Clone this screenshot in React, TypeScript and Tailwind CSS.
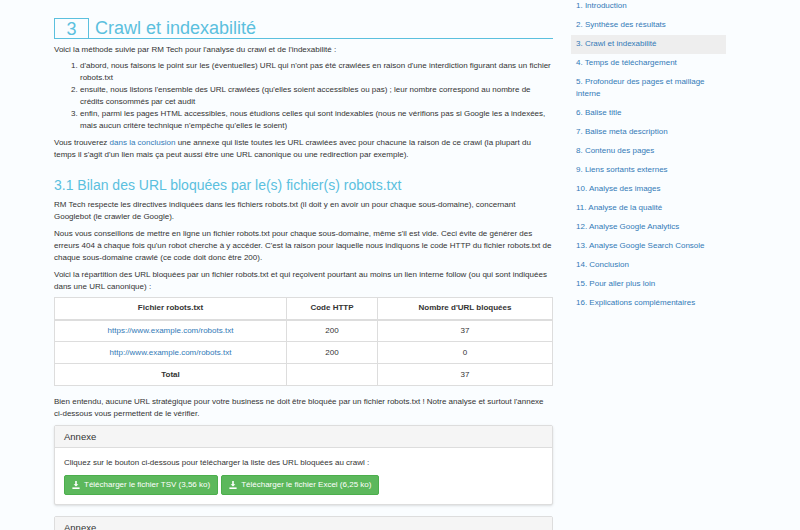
const toc = [
  "1. Introduction",
  "2. Synthèse des résultats",
  "3. Crawl et indexabilité",
  "4. Temps de téléchargement",
  "5. Profondeur des pages et maillage interne",
  "6. Balise title",
  "7. Balise meta description",
  "8. Contenu des pages",
  "9. Liens sortants externes",
  "10. Analyse des images",
  "11. Analyse de la qualité",
  "12. Analyse Google Analytics",
  "13. Analyse Google Search Console",
  "14. Conclusion",
  "15. Pour aller plus loin",
  "16. Explications complémentaires",
];

const DlIcon = () => (
  <svg width="8" height="8" viewBox="0 0 10 10" fill="white">
    <path d="M4 0h2v4h2L5 7 2 4h2z" />
    <rect x="0.5" y="8" width="9" height="2" />
  </svg>
);

const App = () => {
  return (
    <div
      className="flex h-[530px] w-[800px] overflow-hidden bg-[#fafdff] text-[8px] leading-[12px] text-[#333]"
      style={{ fontFamily: "'Liberation Sans', Arial, sans-serif" }}
    >
      <main className="ml-[54px] w-[499px] pt-[18px]">
        <div className="flex items-end border-b border-[#5bc0de]">
          <div className="flex h-[20px] w-[35px] items-center justify-center border border-b-0 border-[#5bc0de] text-[18px] leading-none text-[#5bc0de]">
            3
          </div>
          <h1 className="ml-[6px] text-[18px] leading-[20px] text-[#5bc0de]">Crawl et indexabilité</h1>
        </div>
        <p className="mt-[5px]">Voici la méthode suivie par RM Tech pour l'analyse du crawl et de l'indexabilité :</p>
        <ol className="mt-[4px] list-decimal pl-[26px] leading-[12px]">
          <li>d'abord, nous faisons le point sur les (éventuelles) URL qui n'ont pas été crawlées en raison d'une interdiction figurant dans un fichier robots.txt</li>
          <li>ensuite, nous listons l'ensemble des URL crawlées (qu'elles soient accessibles ou pas) ; leur nombre correspond au nombre de crédits consommés par cet audit</li>
          <li>enfin, parmi les pages HTML accessibles, nous étudions celles qui sont indexables (nous ne vérifions pas si Google les a indexées, mais aucun critère technique n'empêche qu'elles le soient)</li>
        </ol>
        <p className="mt-[5px]">
          Vous trouverez <span className="text-[#337ab7]">dans la conclusion</span> une annexe qui liste toutes les URL crawlées avec pour chacune la raison de ce crawl (la plupart du temps il s'agit d'un lien mais ça peut aussi être une URL canonique ou une redirection par exemple).
        </p>
        <h2 className="mt-[15px] text-[14px] leading-[18px] text-[#5bc0de]">3.1 Bilan des URL bloquées par le(s) fichier(s) robots.txt</h2>
        <p className="mt-[5px]">RM Tech respecte les directives indiquées dans les fichiers robots.txt (il doit y en avoir un pour chaque sous-domaine), concernant Googlebot (le crawler de Google).</p>
        <p className="mt-[5px]">Nous vous conseillons de mettre en ligne un fichier robots.txt pour chaque sous-domaine, même s'il est vide. Ceci évite de générer des erreurs 404 à chaque fois qu'un robot cherche à y accéder. C'est la raison pour laquelle nous indiquons le code HTTP du fichier robots.txt de chaque sous-domaine crawlé (ce code doit donc être 200).</p>
        <p className="mt-[5px]">Voici la répartition des URL bloquées par un fichier robots.txt et qui reçoivent pourtant au moins un lien interne follow (ou qui sont indiquées dans une URL canonique) :</p>
        <table className="mt-[4px] w-full border-collapse border border-[#ddd] bg-white text-center">
          <thead>
            <tr className="h-[22px] border-b-2 border-[#ddd] font-bold">
              <th className="w-[232px] border border-[#ddd]">Fichier robots.txt</th>
              <th className="w-[91px] border border-[#ddd]">Code HTTP</th>
              <th className="border border-[#ddd]">Nombre d'URL bloquées</th>
            </tr>
          </thead>
          <tbody>
            <tr className="h-[22px]">
              <td className="border border-[#ddd] text-[#337ab7]">https://www.example.com/robots.txt</td>
              <td className="border border-[#ddd]">200</td>
              <td className="border border-[#ddd]">37</td>
            </tr>
            <tr className="h-[22px]">
              <td className="border border-[#ddd] text-[#337ab7]">http://www.example.com/robots.txt</td>
              <td className="border border-[#ddd]">200</td>
              <td className="border border-[#ddd]">0</td>
            </tr>
            <tr className="h-[22px]">
              <td className="border border-[#ddd] font-bold">Total</td>
              <td className="border border-[#ddd]"></td>
              <td className="border border-[#ddd]">37</td>
            </tr>
          </tbody>
        </table>
        <p className="mt-[10px]">Bien entendu, aucune URL stratégique pour votre business ne doit être bloquée par un fichier robots.txt ! Notre analyse et surtout l'annexe ci-dessous vous permettent de le vérifier.</p>
        <div className="mt-[5px] rounded-[2px] border border-[#ddd] bg-white shadow-sm">
          <div className="flex h-[22px] items-center border-b border-[#ddd] bg-[#f5f5f5] px-[9px] text-[9.5px]">Annexe</div>
          <div className="px-[9px] pt-[9px] pb-[9px]">
            <p>Cliquez sur le bouton ci-dessous pour télécharger la liste des URL bloquées au crawl :</p>
            <div className="mt-[6px] flex gap-[3px]">
              <button className="flex h-[20px] items-center gap-[4px] rounded-[2px] border border-[#4cae4c] bg-[#5cb85c] px-[7px] text-white">
                <DlIcon />Télécharger le fichier TSV (3,56 ko)
              </button>
              <button className="flex h-[20px] items-center gap-[4px] rounded-[2px] border border-[#4cae4c] bg-[#5cb85c] px-[7px] text-white">
                <DlIcon />Télécharger le fichier Excel (6,25 ko)
              </button>
            </div>
          </div>
        </div>
        <div className="mt-[11px] rounded-[2px] border border-[#ddd] bg-white">
          <div className="flex h-[22px] items-center border-b border-[#ddd] bg-[#f5f5f5] px-[9px] text-[9.5px]">Annexe</div>
        </div>
      </main>
      <nav className="ml-[18px] w-[155px]">
        {toc.map((t, i) => (
          <div
            key={t}
            className={`px-[5px] py-[3.5px] text-[#337ab7] ${i === 2 ? "bg-[#eee]" : ""} ${i === 0 ? "pt-0" : ""}`}
          >
            {t}
          </div>
        ))}
      </nav>
    </div>
  );
};

export default App;
